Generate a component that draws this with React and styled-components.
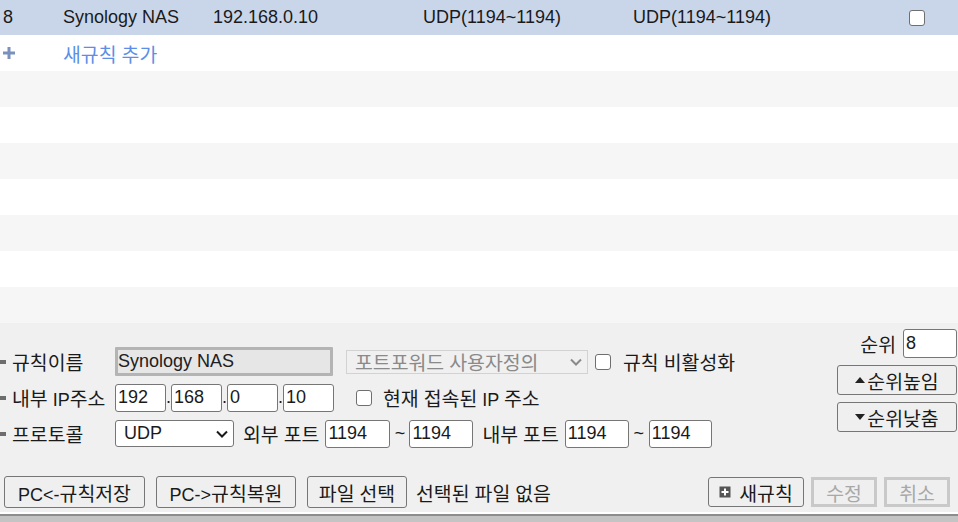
import styled, { createGlobalStyle } from "styled-components"

const GlobalStyle = createGlobalStyle`
    html, body {
        margin: 0;
        padding: 0;
        background: #ffffff;
        overflow: hidden;
    }
    body {
        font-family: "Liberation Sans", "Noto Sans CJK KR", sans-serif;
        color: #1a1a1a;
    }
`

const Page = styled.div`
    width: 958px;
    height: 522px;
    display: flex;
    flex-direction: column;
`

const Table = styled.div`
    display: flex;
    flex-direction: column;
`

const Row = styled.div`
    display: grid;
    grid-template-columns: 60px 150px 210px 210px 1fr 49px;
    align-items: center;
    height: ${(p) => p.h || 36}px;
    padding-left: 3px;
    font-size: 18px;
    background: ${(p) => p.bg || "#ffffff"};
`

// hangul in the reference is drawn a bit wider than the latin text
const Hangul = styled.span`
    font-family: "Noto Sans CJK KR", sans-serif;
    font-size: 19.4px;
`

const Ko = ({ children }) => (
    <span>
        {children.split(/([가-힣]+)/).map((part, i) =>
            /[가-힣]/.test(part) ? <Hangul key={i}>{part}</Hangul> : part
        )}
    </span>
)

const AddLink = styled.span`
    color: #5b8ee6;
    font-size: 18px;
`

const CheckBox = styled.input.attrs({ type: "checkbox" })`
    appearance: none;
    margin: 0;
    width: 16px;
    height: 16px;
    border: 1px solid #6f6f6f;
    border-radius: 3px;
    background: #ffffff;
    flex: none;
`

const Panel = styled.div`
    background: #f0f0f0;
    height: 191px;
    display: flex;
    flex-direction: column;
    font-size: 18px;
`

const TopArea = styled.div`
    display: flex;
    justify-content: space-between;
`

const Form = styled.div`
    display: flex;
    flex-direction: column;
    gap: 7px;
    padding-top: 24px;
`

const FormRow = styled.div`
    display: flex;
    align-items: center;
    height: 29px;
`

const Label = styled.div`
    width: 115px;
    display: flex;
    align-items: center;
    flex: none;
    white-space: nowrap;
    &::before {
        content: "";
        width: 6px;
        height: 4px;
        background: #6d6d6d;
        margin-right: 6px;
    }
`

const TextInput = styled.div`
    box-sizing: border-box;
    width: ${(p) => p.w}px;
    height: ${(p) => p.h || 28}px;
    border: 1px solid #767676;
    border-radius: 3px;
    background: #ffffff;
    padding-left: 2px;
    display: flex;
    align-items: center;
    flex: none;
`

const DisabledInput = styled(TextInput)`
    border: 3px solid #b4b4b4;
    border-radius: 1px;
    background: #e6e6e6;
    padding-left: 0;
    color: #202020;
`

const Dot = styled.span`
    width: ${(p) => p.w || 5}px;
    text-align: center;
    flex: none;
`

const SelectBox = styled.div`
    box-sizing: border-box;
    width: ${(p) => p.w}px;
    height: ${(p) => p.h}px;
    margin-left: ${(p) => p.ml || 0}px;
    border: 1px solid ${(p) => (p.disabled ? "#d2d2d2" : "#767676")};
    border-radius: ${(p) => (p.disabled ? 0 : 3)}px;
    background: ${(p) => (p.disabled ? "#f0f0f0" : "#ffffff")};
    color: ${(p) => (p.disabled ? "#8a8a8a" : "#1a1a1a")};
    display: flex;
    align-items: center;
    justify-content: space-between;
    padding: 0 4px 0 8px;
    flex: none;
    white-space: nowrap;
`

const Text = styled.span`
    margin-left: ${(p) => p.ml || 0}px;
    margin-right: ${(p) => p.mr || 0}px;
    white-space: nowrap;
`

const RankBox = styled.div`
    width: 120px;
    padding-top: 6px;
    padding-right: 1px;
    display: flex;
    flex-direction: column;
    align-items: stretch;
    gap: 7px;
`

const RankRow = styled.div`
    display: flex;
    align-items: center;
    justify-content: flex-end;
    gap: 7px;
`

const Button = styled.button`
    box-sizing: border-box;
    font-family: inherit;
    font-size: 18px;
    height: ${(p) => p.h || 32}px;
    width: ${(p) => (p.w ? `${p.w}px` : "auto")};
    padding: 0 ${(p) => p.px ?? 6}px;
    background: #efefef;
    color: ${(p) => (p.disabled ? "#a8a8a8" : "#1a1a1a")};
    border: ${(p) => (p.disabled ? "3px solid #c9c9c9" : "1px solid #767676")};
    border-radius: ${(p) => (p.disabled ? 0 : 3)}px;
    display: flex;
    align-items: center;
    justify-content: center;
    gap: 2px;
    flex: none;
    margin: 0;
    white-space: nowrap;
`

const BottomBar = styled.div`
    display: flex;
    align-items: center;
    margin-top: 28px;
    padding: 0 8px 0 4px;
`

const ButtonGroup = styled.div`
    display: flex;
    align-items: center;
    gap: ${(p) => p.gap || 11}px;
`

const Spacer = styled.div`
    flex: 1;
`

const FooterEdge = styled.div`
    height: 8px;
    border-top: 2px solid #ffffff;
    background: linear-gradient(#8d8d8d 0 2px, #c4c4c4 2px);
`

const Plus = () => (
    <svg width="12" height="12" viewBox="0 0 12 12">
        <rect x="0" y="4.5" width="12" height="3" fill="#7b91bd" />
        <rect x="4.5" y="0" width="3" height="12" fill="#7b91bd" />
    </svg>
)

const Chevron = () => (
    <svg width="14" height="10" viewBox="0 0 14 10">
        <path d="M2 2.5 L7 7.5 L12 2.5" fill="none" stroke="currentColor" strokeWidth="2" />
    </svg>
)

const PlusBox = () => (
    <svg width="12" height="12" viewBox="0 0 12 12" style={{ marginRight: 6 }}>
        <rect x="0.5" y="0.5" width="11" height="11" fill="#555" />
        <rect x="2.5" y="5" width="7" height="2" fill="#fff" />
        <rect x="5" y="2.5" width="2" height="7" fill="#fff" />
    </svg>
)

const Triangle = ({ up }) => (
    <svg width="10" height="8" viewBox="0 0 10 8">
        <path d={up ? "M0 7 L5 1 L10 7 Z" : "M0 1 L10 1 L5 7 Z"} fill="#222" />
    </svg>
)

const emptyRows = [0, 1, 2, 3, 4, 5, 6]

const App = () => {
    return (
        <Page>
            <GlobalStyle />
            <Table>
                <Row h={35} bg="#c9d6ea">
                    <span>8</span>
                    <span>Synology NAS</span>
                    <span>192.168.0.10</span>
                    <span>UDP(1194~1194)</span>
                    <span>UDP(1194~1194)</span>
                    <CheckBox />
                </Row>
                <Row>
                    <Plus />
                    <AddLink><Ko>새규칙 추가</Ko></AddLink>
                </Row>
                {emptyRows.map((i) => (
                    <Row key={i} bg={i % 2 === 0 ? "#f6f6f6" : "#ffffff"} />
                ))}
            </Table>

            <Panel>
                <TopArea>
                    <Form>
                        <FormRow>
                            <Label><Ko>규칙이름</Ko></Label>
                            <DisabledInput w={218} h={29}>Synology NAS</DisabledInput>
                            <SelectBox w={242} h={24} ml={13} disabled>
                                <Ko>포트포워드 사용자정의</Ko>
                                <Chevron />
                            </SelectBox>
                            <CheckBox style={{ marginLeft: 7 }} />
                            <Text ml={12}><Ko>규칙 비활성화</Ko></Text>
                        </FormRow>
                        <FormRow>
                            <Label><Ko>내부 IP주소</Ko></Label>
                            <TextInput w={51}>192</TextInput>
                            <Dot>.</Dot>
                            <TextInput w={51}>168</TextInput>
                            <Dot>.</Dot>
                            <TextInput w={51}>0</TextInput>
                            <Dot>.</Dot>
                            <TextInput w={51}>10</TextInput>
                            <CheckBox style={{ marginLeft: 22 }} />
                            <Text ml={11}><Ko>현재 접속된 IP 주소</Ko></Text>
                        </FormRow>
                        <FormRow>
                            <Label><Ko>프로토콜</Ko></Label>
                            <SelectBox w={119} h={27}>
                                <span>UDP</span>
                                <Chevron />
                            </SelectBox>
                            <Text ml={9} mr={6}><Ko>외부 포트</Ko></Text>
                            <TextInput w={65}>1194</TextInput>
                            <Dot w={19}>~</Dot>
                            <TextInput w={64}>1194</TextInput>
                            <Text ml={9} mr={6}><Ko>내부 포트</Ko></Text>
                            <TextInput w={64}>1194</TextInput>
                            <Dot w={20}>~</Dot>
                            <TextInput w={63}>1194</TextInput>
                        </FormRow>
                    </Form>

                    <RankBox>
                        <RankRow>
                            <Ko>순위</Ko>
                            <TextInput w={54} h={29}>8</TextInput>
                        </RankRow>
                        <Button h={30} px={4}>
                            <Triangle up />
                            <Ko>순위높임</Ko>
                        </Button>
                        <Button h={30} px={4}>
                            <Triangle />
                            <Ko>순위낮춤</Ko>
                        </Button>
                    </RankBox>
                </TopArea>

                <BottomBar>
                    <ButtonGroup>
                        <Button w={141}><Ko>PC&lt;-규칙저장</Ko></Button>
                        <Button w={140}><Ko>PC-&gt;규칙복원</Ko></Button>
                        <Button w={100}><Ko>파일 선택</Ko></Button>
                    </ButtonGroup>
                    <Text ml={9}><Ko>선택된 파일 없음</Ko></Text>
                    <Spacer />
                    <ButtonGroup gap={7}>
                        <Button w={96} h={30}>
                            <PlusBox />
                            <Ko>새규칙</Ko>
                        </Button>
                        <Button w={66} h={30} disabled><Ko>수정</Ko></Button>
                        <Button w={66} h={30} disabled><Ko>취소</Ko></Button>
                    </ButtonGroup>
                </BottomBar>
            </Panel>
            <FooterEdge />
        </Page>
    )
}

export default App
